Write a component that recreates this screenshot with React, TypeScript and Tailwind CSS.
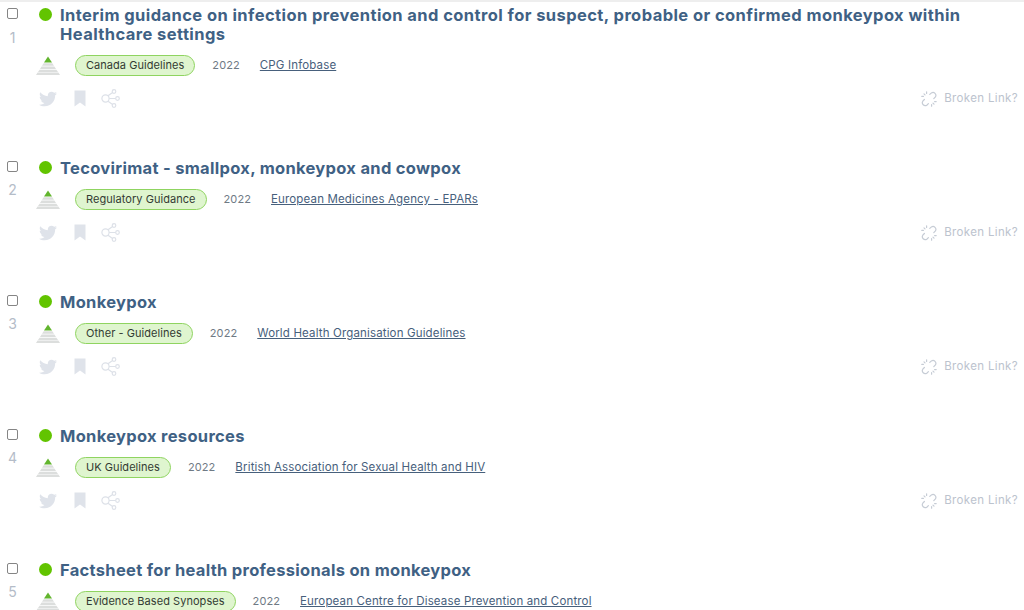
import React from "react";
import { FaTwitter } from "react-icons/fa";

const results = [
  {
    title: (
      <>
        Interim guidance on infection prevention and control for suspect, probable or confirmed monkeypox within
        <br />
        Healthcare settings
      </>
    ),
    tag: "Canada Guidelines",
    source: "CPG Infobase",
  },
  { title: "Tecovirimat - smallpox, monkeypox and cowpox", tag: "Regulatory Guidance", source: "European Medicines Agency - EPARs" },
  { title: "Monkeypox", tag: "Other - Guidelines", source: "World Health Organisation Guidelines" },
  { title: "Monkeypox resources", tag: "UK Guidelines", source: "British Association for Sexual Health and HIV" },
  { title: "Factsheet for health professionals on monkeypox", tag: "Evidence Based Synopses", source: "European Centre for Disease Prevention and Control" },
];

function Pyramid() {
  return (
    <svg width="24" height="19" viewBox="0 0 24 19" className="shrink-0">
      <polygon points="12,0.5 16,6.5 8,6.5" fill="#62b52e" />
      <polygon points="7.6,7.2 16.4,7.2 18,9.8 6,9.8" fill="#dcdedd" />
      <polygon points="5.6,10.5 18.4,10.5 20,13 4,13" fill="#dcdedd" />
      <polygon points="3.6,13.7 20.4,13.7 22,16 2,16" fill="#dcdedd" />
      <polygon points="1.6,16.6 22.4,16.6 24,19 0,19" fill="#dcdedd" />
    </svg>
  );
}

function Bookmark() {
  return (
    <svg width="12" height="17" viewBox="0 0 12 17">
      <path d="M0.5 0.5h11v16L6 12.5 0.5 16.5z" fill="#dfe3ea" />
    </svg>
  );
}

function Share() {
  return (
    <svg width="19" height="19" viewBox="0 0 19 19" fill="none" stroke="#dde1e8" strokeWidth="1.2">
      <circle cx="4.5" cy="9.5" r="3.6" />
      <circle cx="13" cy="2.5" r="1.8" />
      <circle cx="16.5" cy="9.5" r="1.8" />
      <circle cx="13" cy="16.5" r="1.8" />
      <path d="M7 6.8 11.6 3.6M8.2 9.5h6.5M7 12.2l4.6 3.2" />
    </svg>
  );
}

function BrokenLink() {
  return (
    <svg width="16" height="16" viewBox="0 0 16 16" fill="none" stroke="#c6ccd5" strokeWidth="1.2" strokeLinecap="round">
      <path d="M8.8 3.4 10.4 1.9a2.9 2.9 0 0 1 4 4L12.8 7.6" />
      <path d="M3.4 8.5 1.8 10.2a2.9 2.9 0 0 0 4 4L7.4 12.6" />
      <path d="M5.6 0.8v1.6M0.8 5.4h1.6M3 2.8l1 1M10.6 15.2v-1.6M15.2 10.6h-1.6M13 13.2l-1-1" />
    </svg>
  );
}

function ResultItem({ index, title, tag, source, first }: { index: number; title: React.ReactNode; tag: string; source: string; first: boolean }) {
  return (
    <div className={first ? "flex h-[153px] border-t-2 border-[#eeeeee] pt-[4px]" : "flex h-[134px] pt-[6px]"}>
      <div className="flex w-[25px] shrink-0 flex-col items-center">
        <input type="checkbox" className="mt-[2px] h-[11px] w-[11px] appearance-none rounded-[2px] border border-[#858585] bg-white" />
        <span className={first ? "mt-[11px] text-[14px] leading-[16px] text-[#b4bcc8]" : "mt-[10px] text-[14px] leading-[16px] text-[#b4bcc8]"}>{index}</span>
      </div>
      <div className="min-w-0 flex-1 pl-[11px]">
        <div className="flex">
          <span className="mt-[2px] ml-[3px] h-[13px] w-[13px] shrink-0 rounded-full bg-[#62c400]" />
          <h3 className={first ? "ml-[8px] text-[16.5px] leading-[18.5px] font-bold tracking-[0.42px] text-[#3f6184]" : "ml-[8px] text-[16.5px] leading-[19px] font-bold tracking-[0.3px] text-[#3f6184]"}>{title}</h3>
        </div>
        <div className={first ? "mt-[12px] flex h-[21px] items-center" : "mt-[11px] flex h-[21px] items-center"}>
          <Pyramid />
          <span className="ml-[15px] rounded-[11px] border border-[#8fd460] bg-[#dff5cf] px-[10px] text-[11px] leading-[19px] tracking-[0.05px] text-[#333b33]">{tag}</span>
          <span className="ml-[17px] text-[11px] tracking-[0.1px] text-[#6f7a85]">2022</span>
          <a className="ml-[20px] text-[11.5px] tracking-[0.15px] text-[#47607c] underline">{source}</a>
        </div>
        <div className="mt-[13px] flex h-[19px] items-center pr-[6px]">
          <FaTwitter className="ml-[3px] h-[18px] w-[18px] text-[#dfe3ea]" />
          <span className="ml-[17px]">
            <Bookmark />
          </span>
          <span className="ml-[15px]">
            <Share />
          </span>
          <span className="ml-auto flex items-center text-[11.5px] tracking-[0.35px] text-[#bcc3ce]">
            <span className="mr-[7px]">
              <BrokenLink />
            </span>
            Broken Link?
          </span>
        </div>
      </div>
    </div>
  );
}

export default function App() {
  return (
    <div className="h-[610px] w-[1024px] overflow-hidden bg-white font-['Inter',sans-serif]">
      {results.map((r, i) => (
        <ResultItem key={i} index={i + 1} title={r.title} tag={r.tag} source={r.source} first={i === 0} />
      ))}
    </div>
  );
}
